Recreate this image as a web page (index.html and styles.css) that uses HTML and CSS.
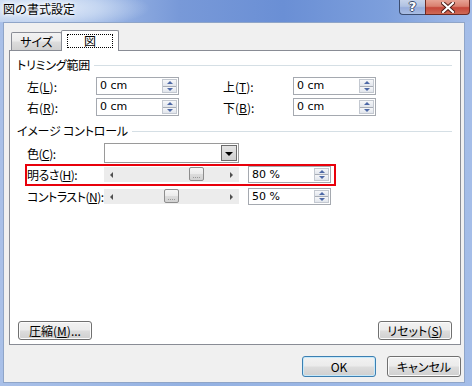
FILE: index.html
```html
<!DOCTYPE html>
<html lang="ja">
<head>
<meta charset="utf-8">
<title>図の書式設定</title>
<link rel="stylesheet" href="styles.css">
</head>
<body>
<div class="window">
  <div class="titlebar">
    <div class="title">図の書式設定</div>
    <div class="caption-buttons">
      <div class="cap-btn help"><span>?</span></div>
      <div class="cap-btn close">
        <svg width="14" height="11" viewBox="0 0 14 11"><path d="M2 1 L12 10 M12 1 L2 10" stroke="#4a1a14" stroke-width="4" stroke-linecap="square"/><path d="M2 1 L12 10 M12 1 L2 10" stroke="#ffffff" stroke-width="2.2" stroke-linecap="square"/></svg>
      </div>
    </div>
  </div>
  <div class="client">
    <div class="tabs">
      <div class="tab">サイズ</div>
      <div class="tab active"><span class="focus">図</span></div>
    </div>
    <div class="panel">
      <div class="group-head"><span>トリミング範囲</span><span class="rule"></span></div>
      <div class="crop-grid">
        <div class="lbl">左(<u>L</u>):</div>
        <div class="spin"><span class="val">0 cm</span><span class="spin-btns"><i class="up"></i><i class="down"></i></span></div>
        <div class="lbl">上(<u>T</u>):</div>
        <div class="spin"><span class="val">0 cm</span><span class="spin-btns"><i class="up"></i><i class="down"></i></span></div>
        <div class="lbl">右(<u>R</u>):</div>
        <div class="spin"><span class="val">0 cm</span><span class="spin-btns"><i class="up"></i><i class="down"></i></span></div>
        <div class="lbl">下(<u>B</u>):</div>
        <div class="spin"><span class="val">0 cm</span><span class="spin-btns"><i class="up"></i><i class="down"></i></span></div>
      </div>
      <div class="group-head second"><span>イメージ コントロール</span><span class="rule"></span></div>
      <div class="ctl-row color-row">
        <div class="ctl-lbl">色(<u>C</u>):</div>
        <div class="dropdown"><span class="dd-btn"></span></div>
      </div>
      <div class="ctl-row slider-row highlight">
        <div class="ctl-lbl">明るさ(<u>H</u>):</div>
        <div class="slider"><span class="arr left"></span><span class="thumb" style="left:85px"></span><span class="arr right"></span></div>
        <div class="spin"><span class="val">80 %</span><span class="spin-btns"><i class="up"></i><i class="down"></i></span></div>
      </div>
      <div class="ctl-row slider-row third">
        <div class="ctl-lbl">コントラスト(<u>N</u>):</div>
        <div class="slider"><span class="arr left"></span><span class="thumb" style="left:60px"></span><span class="arr right"></span></div>
        <div class="spin"><span class="val">50 %</span><span class="spin-btns"><i class="up"></i><i class="down"></i></span></div>
      </div>
      <div class="panel-buttons">
        <div class="btn">圧縮(<u>M</u>)...</div>
        <div class="btn">リセット(<u>S</u>)</div>
      </div>
    </div>
    <div class="dialog-buttons">
      <div class="btn big default">OK</div>
      <div class="btn big">キャンセル</div>
    </div>
  </div>
</div>
</body>
</html>
```
FILE: styles.css
```css
* { box-sizing: border-box; }
html, body { margin: 0; padding: 0; }
body {
  width: 472px;
  height: 386px;
  overflow: hidden;
  font-family: "Noto Sans CJK JP", "Noto Sans", sans-serif;
  font-size: 12px;
  font-feature-settings: "palt";
  color: #000;
}
u { text-decoration: underline; text-underline-offset: 1px; }

.window {
  width: 472px;
  height: 386px;
  display: flex;
  flex-direction: column;
  background: linear-gradient(90deg, #a9c0e8 0%, #93b1e2 40%, #a4bde8 100%);
}

.titlebar {
  height: 22px;
  flex: none;
  display: flex;
  align-items: flex-start;
  background:
    radial-gradient(ellipse 110px 22px at 40px 8px, rgba(235,242,252,0.95) 0%, rgba(220,232,248,0.6) 55%, rgba(220,232,248,0) 100%),
    linear-gradient(90deg, #b3c8ea 0%, #9fb9e6 20%, #7899d8 38%, #6a8fd5 60%, #7d9fdc 82%, #a4bde8 100%);
}
.title {
  margin: 2px 0 0 3px;
  line-height: 14px;
  font-feature-settings: normal;
  text-shadow: 0 0 4px #fff, 0 0 4px #fff;
}
.caption-buttons {
  margin-left: auto;
  margin-right: 2px;
  display: flex;
  height: 15px;
}
.cap-btn {
  height: 15px;
  display: flex;
  align-items: center;
  justify-content: center;
  border: 1px solid #3c4d70;
  border-top: none;
}
.help {
  width: 26px;
  border-right: none;
  border-radius: 0 0 0 4px;
  background: linear-gradient(#c6d3ea 0%, #b0c2e2 45%, #98addb 55%, #a9bde3 100%);
}
.help span {
  color: #fff;
  font-family: "DejaVu Sans", sans-serif;
  font-weight: bold;
  font-size: 13px;
  line-height: 12px;
  text-shadow: 1px 0 0 #3b4a6b, -1px 0 0 #3b4a6b, 0 1px 0 #3b4a6b, 0 -1px 0 #3b4a6b;
}
.close {
  width: 45px;
  border-color: #6d2a22;
  border-radius: 0 0 4px 0;
  background: linear-gradient(#e7a395 0%, #d9806f 45%, #c5473a 55%, #cf6a55 100%);
}

.client {
  flex: 1;
  margin: 0 7px 3px 3px;
  background: #f0f0f0;
  border: 1px solid #8fa5c8;
  display: flex;
  flex-direction: column;
  padding: 7px 3px 0 5px;
}

.tabs {
  height: 20px;
  display: flex;
  align-items: flex-end;
  padding-left: 2px;
  position: relative;
  z-index: 1;
}
.tab {
  height: 18px;
  width: 51px;
  border: 1px solid #898c95;
  border-bottom: none;
  border-radius: 2px 2px 0 0;
  background: linear-gradient(#f3f3f3 0%, #ebebeb 48%, #dddddd 52%, #d0d0d0 100%);
  display: flex;
  align-items: center;
  justify-content: center;
  line-height: 14px;
}
.tab.active {
  height: 21px;
  width: 58px;
  margin-left: -1px;
  margin-bottom: -1px;
  background: #fff;
  align-items: flex-start;
  padding-top: 3px;
}
.focus {
  width: 46px;
  height: 14px;
  border: 1px dotted #000;
  display: flex;
  align-items: center;
  justify-content: center;
  line-height: 12px;
}

.panel {
  height: 295px;
  width: 452px;
  flex: none;
  background: #fff;
  border: 1px solid #898c95;
  display: flex;
  flex-direction: column;
  padding: 7px 8px 4px 7px;
}

.group-head {
  height: 14px;
  line-height: 14px;
  display: flex;
  align-items: center;
  letter-spacing: -0.2px;
}
.group-head.second { margin-top: 8px; }
.rule {
  flex: 1;
  height: 1px;
  margin-left: 4px;
  margin-right: 0;
  background: #d5dfe5;
}

.crop-grid {
  margin: 5px 0 0 10px;
  display: grid;
  grid-template-columns: 69px 127px 70px 83px;
  grid-auto-rows: 18px;
  row-gap: 3px;
}
.lbl, .ctl-lbl {
  display: flex;
  align-items: center;
  white-space: nowrap;
}
.ctl-lbl { letter-spacing: -0.5px; }

.spin {
  width: 83px;
  height: 100%;
  border: 1px solid #a5a9b0;
  background: #fff;
  display: flex;
  align-items: center;
  padding: 1px 1px 1px 3px;
}
.val {
  flex: 1;
  line-height: 14px;
  font-family: "DejaVu Sans", sans-serif;
  font-size: 11px;
}
.spin-btns {
  width: 15px;
  height: 100%;
  display: flex;
  flex-direction: column;
  border: 1px solid #c3c8d0;
}
.spin-btns i {
  flex: 1;
  display: flex;
  align-items: center;
  justify-content: center;
  background: linear-gradient(#f6f7f9, #e1e5ec);
}
.spin-btns i.up { border-bottom: 1px solid #a8adb6; }
.spin-btns i.up::after {
  content: "";
  border-left: 3px solid transparent;
  border-right: 3px solid transparent;
  border-bottom: 3px solid #4d68a6;
}
.spin-btns i.down::after {
  content: "";
  border-left: 3px solid transparent;
  border-right: 3px solid transparent;
  border-top: 3px solid #4d68a6;
}

.ctl-row {
  margin-left: 10px;
  display: flex;
  align-items: center;
  height: 17px;
  width: 304px;
}
.color-row { height: 20px; margin-top: 5px; }
.highlight { margin-top: 3px; position: relative; }
.third { margin-top: 5px; }
.ctl-lbl { width: 77px; flex: none; height: 100%; overflow: hidden; }

.dropdown {
  width: 135px;
  height: 20px;
  border: 1px solid #9a9a9a;
  background: #fff;
  display: flex;
  justify-content: flex-end;
  padding: 1px;
}
.dd-btn {
  width: 16px;
  height: 100%;
  border: 1px solid #6c6c6c;
  background: linear-gradient(#e4e4e4, #cfcfcf);
  display: flex;
  align-items: center;
  justify-content: center;
}
.dd-btn::after {
  content: "";
  border-left: 4px solid transparent;
  border-right: 4px solid transparent;
  border-top: 4px solid #000;
  margin-top: 1px;
}

.slider {
  width: 135px;
  flex: none;
  height: 15px;
  margin-right: 9px;
  background: #ececec;
  position: relative;
  display: flex;
  align-items: center;
  justify-content: space-between;
  padding: 0 6px;
}
.arr.left {
  border-top: 3px solid transparent;
  border-bottom: 3px solid transparent;
  border-right: 3px solid #505050;
}
.arr.right {
  border-top: 3px solid transparent;
  border-bottom: 3px solid transparent;
  border-left: 3px solid #505050;
}
.thumb {
  position: absolute;
  top: 0;
  width: 15px;
  height: 14px;
  border: 1px solid #8d8d8d;
  border-radius: 2px;
  background: linear-gradient(#f6f6f6 0%, #ebebeb 50%, #dcdcdc 51%, #d2d2d2 100%);
}
.thumb::after {
  content: "";
  position: absolute;
  left: 3px;
  right: 3px;
  bottom: 2px;
  border-bottom: 1px dotted #9a9a9a;
}
.slider-row .spin { height: 17px; flex: none; }

.highlight::after {
  content: "";
  position: absolute;
  left: -2px;
  top: -2px;
  right: -5px;
  bottom: -3px;
  border: 2px solid #e8000b;
  pointer-events: none;
}

.panel-buttons {
  margin-top: auto;
  display: flex;
  justify-content: space-between;
  padding-left: 1px;
}
.btn {
  width: 74px;
  height: 19px;
  border: 1px solid #707070;
  border-radius: 3px;
  background: linear-gradient(#f2f2f2 0%, #ebebeb 48%, #dddddd 52%, #cfcfcf 100%);
  box-shadow: inset 0 0 0 1px #fbfbfb;
  display: flex;
  align-items: center;
  justify-content: center;
  line-height: 14px;
  white-space: nowrap;
}
.dialog-buttons {
  margin-top: 11px;
  display: flex;
  justify-content: flex-end;
  gap: 11px;
  padding-right: 0;
}
.btn.big { height: 21px; }
.btn.default {
  border-color: #3c7fb1;
  box-shadow: inset 0 0 0 1px #c6e9fb;
}
```
